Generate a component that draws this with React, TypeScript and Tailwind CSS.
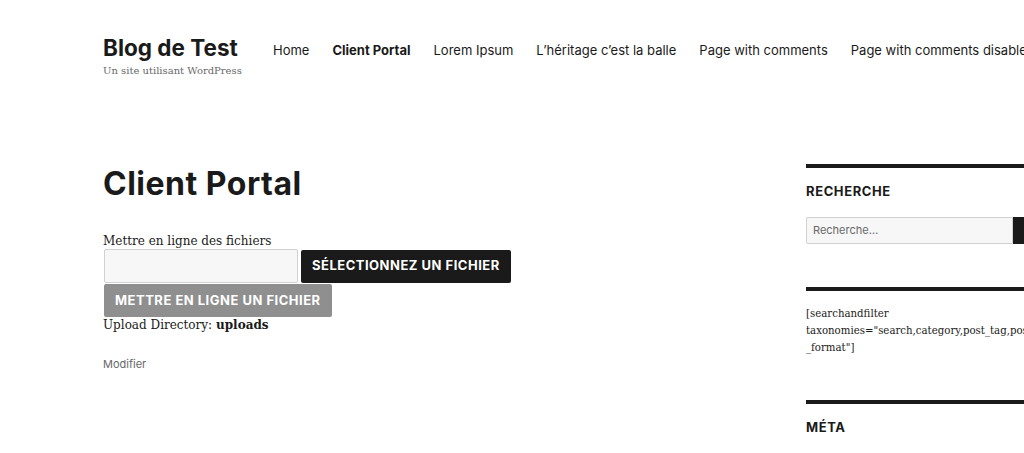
import React from "react";

const sans = "font-['Inter',sans-serif]";
const serif = "font-['DejaVu_Serif',serif]";

export default function App() {
  return (
    <div className="w-[1024px] h-[453px] overflow-hidden bg-white text-[#1a1a1a]">
      <div className="pl-[103px]">
        {/* Header */}
        <header className="flex items-start pt-[34px]">
          <div className="w-[170px] shrink-0">
            <div className={`${sans} text-[22.5px] leading-[28px] font-bold`}>Blog de Test</div>
            <div className={`${serif} text-[10px] leading-[16px] text-[#686868] mt-[1px]`}>Un site utilisant WordPress</div>
          </div>
          <nav className={`${sans} flex gap-[23px] text-[13px] leading-[32px] whitespace-nowrap`}>
            <span>Home</span>
            <span className="font-bold">Client Portal</span>
            <span>Lorem Ipsum</span>
            <span>L’héritage c’est la balle</span>
            <span>Page with comments</span>
            <span>Page with comments disabled</span>
          </nav>
        </header>

        {/* Content */}
        <div className="flex mt-[85px]">
          <main className="w-[703px] shrink-0">
            <h1 className={`${sans} text-[32px] leading-[40px] font-bold tracking-[0.5px]`}>Client Portal</h1>
            <div className="mt-[29px]">
              <p className={`${serif} text-[12px] leading-[16px]`}>Mettre en ligne des fichiers</p>
              <div className="flex items-center gap-[3px]">
                <div className="w-[194px] h-[34px] bg-[#f7f7f7] border border-[#d1d1d1] rounded-[2px] ml-[1px]"></div>
                <button className={`${sans} h-[33px] px-[11px] bg-[#1a1a1a] text-white text-[13px] font-bold uppercase tracking-[0.5px] rounded-[2px]`}>Sélectionnez un fichier</button>
              </div>
              <button className={`${sans} ml-[1px] mt-[1px] h-[33px] px-[11px] bg-[#8f8f8f] text-white text-[13px] font-bold uppercase tracking-[0.5px] rounded-[2px]`}>Mettre en ligne un fichier</button>
              <p className={`${serif} text-[12px] leading-[16px]`}>Upload Directory: <b>uploads</b></p>
              <p className={`${sans} text-[11px] leading-[16px] text-[#686868] mt-[23px]`}>Modifier</p>
            </div>
          </main>

          <aside className="w-[320px] shrink-0">
            <section className="border-t-4 border-[#1a1a1a] pt-[13px]">
              <h2 className={`${sans} text-[13px] leading-[20px] font-bold uppercase tracking-[0.6px]`}>Recherche</h2>
              <div className="flex mt-[16px]">
                <div className={`${sans} w-[207px] h-[27px] bg-[#f7f7f7] border border-[#d1d1d1] rounded-l-[2px] text-[11px] leading-[25px] text-[#686868] px-[6px]`}>Recherche…</div>
                <div className="w-[40px] h-[27px] bg-[#1a1a1a]"></div>
              </div>
            </section>
            <section className="border-t-4 border-[#1a1a1a] mt-[43px] pt-[14px] h-[113px]">
              <p className={`${serif} text-[10.2px] leading-[17px] whitespace-nowrap`}>
                [searchandfilter<br />taxonomies="search,category,post_tag,post<br />_format"]
              </p>
            </section>
            <section className="border-t-4 border-[#1a1a1a] pt-[13px]">
              <h2 className={`${sans} text-[13px] leading-[20px] font-bold uppercase tracking-[0.6px]`}>Méta</h2>
            </section>
          </aside>
        </div>
      </div>
    </div>
  );
}
